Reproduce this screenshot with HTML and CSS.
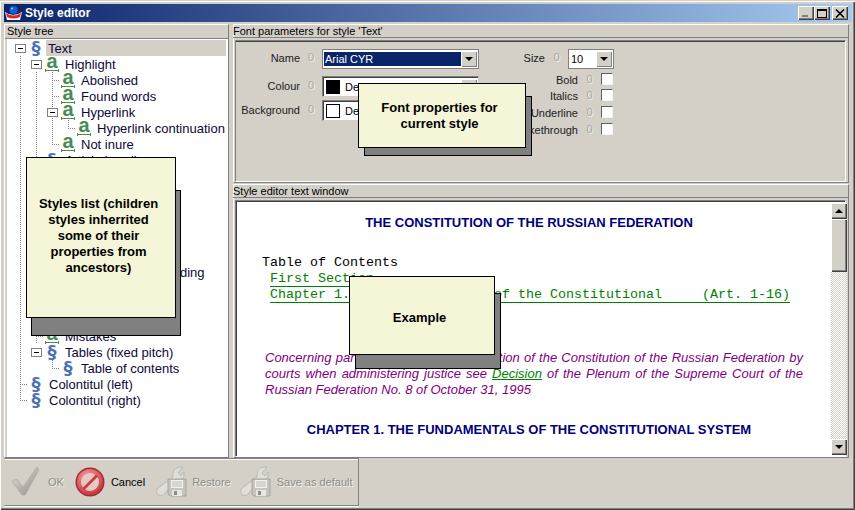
FILE: index.html
```html
<!DOCTYPE html>
<html lang="en">
<head>
  <meta charset="UTF-8" />
  <title>Style editor</title>
  <link rel="stylesheet" href="styles.css">
</head>
<body>
<div class="window">

  <!-- Title bar -->
  <div class="titlebar">
    <svg class="app-logo" width="17" height="16" viewBox="0 0 17 16">
      <path d="M0 7 Q8 13 17 7 L15 15 L2 15 Z" fill="#fff"/>
      <path d="M1 8 Q8 13 16 8 L15 12 Q8 15 2 12 Z" fill="#d8262c"/>
      <circle cx="8.5" cy="5" r="4" fill="#1060d8"/>
      <circle cx="7" cy="3.5" r="1" fill="#a8d0ff"/>
    </svg>
    <span class="title-text">Style editor</span>
    <div class="caption-btns">
      <span class="caption-btn"><i class="glyph-min"></i></span>
      <span class="caption-btn"><i class="glyph-max"></i></span>
      <span class="caption-btn close">
        <svg width="10" height="9" viewBox="0 0 10 9"><path d="M1 0.5 L9 8.5 M9 0.5 L1 8.5" stroke="#000" stroke-width="1.6" fill="none"/></svg>
      </span>
    </div>
  </div>

  <div class="main">

    <!-- Style tree -->
    <div class="pane tree-pane">
      <div class="pane-head">Style tree</div>
      <div class="tree">
        <div class="row"><span class="col"><b class="box"></b></span><span class="icon sect">§</span><span class="label selected">Text</span></div>
        <div class="row"><span class="col v"></span><span class="col"><b class="box"></b></span><span class="icon letter">a</span><span class="label">Highlight</span></div>
        <div class="row"><span class="col v"></span><span class="col v"></span><span class="col t"></span><span class="icon letter">a</span><span class="label">Abolished</span></div>
        <div class="row"><span class="col v"></span><span class="col v"></span><span class="col t"></span><span class="icon letter">a</span><span class="label">Found words</span></div>
        <div class="row"><span class="col v"></span><span class="col v"></span><span class="col v"><b class="box"></b></span><span class="icon letter">a</span><span class="label">Hyperlink</span></div>
        <div class="row"><span class="col v"></span><span class="col v"></span><span class="col v"></span><span class="col l"></span><span class="icon letter">a</span><span class="label">Hyperlink continuation</span></div>
        <div class="row"><span class="col v"></span><span class="col v"></span><span class="col l"></span><span class="icon letter">a</span><span class="label">Not inure</span></div>
        <div class="row"><span class="col v"></span><span class="col t"></span><span class="icon sect">§</span><span class="label">Article heading</span></div>
        <div class="row"><span class="col v"></span></div>
        <div class="row"><span class="col v"></span></div>
        <div class="row"><span class="col v"></span></div>
        <div class="row"><span class="col v"></span></div>
        <div class="row"><span class="col v"></span></div>
        <div class="row"><span class="col v"></span></div>
        <div class="row"><span class="col v"></span><span class="col t"></span><span class="icon sect">§</span><span class="label">Section and subheading</span></div>
        <div class="row"><span class="col v"></span></div>
        <div class="row"><span class="col v"></span></div>
        <div class="row"><span class="col v"></span></div>
        <div class="row"><span class="col v"></span><span class="col t"></span><span class="icon letter">a</span><span class="label">Mistakes</span></div>
        <div class="row"><span class="col v"></span><span class="col"><b class="box"></b></span><span class="icon sect">§</span><span class="label">Tables (fixed pitch)</span></div>
        <div class="row"><span class="col v"></span><span class="col"></span><span class="col l"></span><span class="icon sect">§</span><span class="label">Table of contents</span></div>
        <div class="row"><span class="col t"></span><span class="icon sect">§</span><span class="label">Colontitul (left)</span></div>
        <div class="row"><span class="col l"></span><span class="icon sect">§</span><span class="label">Colontitul (right)</span></div>
      </div>
    </div>

    <div class="right-side">

      <!-- Font parameters -->
      <div class="pane font-pane">
        <div class="pane-head">Font parameters for style 'Text'</div>
        <div class="font-form">
          <div class="form-left">
            <div class="field name-field">
              <span class="field-label">Name</span><span class="zero">0</span>
              <div class="combo">
                <span class="combo-value selected-value">Arial CYR</span>
                <span class="combo-btn"><i class="arrow"></i></span>
              </div>
            </div>
            <div class="field colour-field">
              <span class="field-label">Colour</span><span class="zero">0</span>
              <div class="combo sunken">
                <i class="swatch black"></i><span class="combo-value">Default</span>
                <span class="combo-btn"><i class="arrow"></i></span>
              </div>
            </div>
            <div class="field bg-field">
              <span class="field-label">Background</span><span class="zero">0</span>
              <div class="combo sunken">
                <i class="swatch"></i><span class="combo-value">Default</span>
                <span class="combo-btn"><i class="arrow"></i></span>
              </div>
            </div>
          </div>
          <div class="form-right">
            <div class="size-field">
              <span class="size-label">Size</span><span class="zero">0</span>
              <div class="combo size-combo">
                <span class="combo-value">10</span>
                <span class="combo-btn"><i class="arrow"></i></span>
              </div>
            </div>
            <div class="check-field h16"><span class="check-label">Bold</span><span class="zero">0</span><i class="checkbox"></i></div>
            <div class="check-field h17"><span class="check-label">Italics</span><span class="zero">0</span><i class="checkbox"></i></div>
            <div class="check-field h17"><span class="check-label">Underline</span><span class="zero">0</span><i class="checkbox"></i></div>
            <div class="check-field h17"><span class="check-label">Strikethrough</span><span class="zero">0</span><i class="checkbox"></i></div>
          </div>
        </div>
      </div>

      <!-- Sample text -->
      <div class="pane text-pane">
        <div class="pane-head">Style editor text window</div>
        <div class="text-frame">
          <div class="doc">
            <div class="doc-title">THE CONSTITUTION OF THE RUSSIAN FEDERATION</div>
            <div class="toc-head">Table of Contents</div>
            <div class="toc-link short">First Section</div>
            <div class="toc-link">Chapter 1. The Fundamentals of the Constitutional     (Art. 1-16)</div>
            <p class="note">Concerning particular aspects of application of the Constitution of the Russian Federation by courts when administering justice see <a class="note-link">Decision</a> of the Plenum of the Supreme Court of the Russian Federation No. 8 of October 31, 1995</p>
            <div class="doc-chapter">CHAPTER 1. THE FUNDAMENTALS OF THE CONSTITUTIONAL SYSTEM</div>
          </div>
          <div class="scrollbar">
            <span class="sb-btn"><i class="sb-up"></i></span>
            <span class="sb-thumb"></span>
            <span class="sb-track"></span>
            <span class="sb-btn"><i class="sb-down"></i></span>
          </div>
        </div>
      </div>
    </div>
  </div>

  <!-- Bottom toolbar -->
  <div class="toolbar">
    <div class="tool disabled ok-tool">
      <svg width="28" height="30" viewBox="0 0 28 30">
        <defs><linearGradient id="chk" x1="0" y1="0" x2="1" y2="1"><stop offset="0" stop-color="#e4e2dc"/><stop offset="1" stop-color="#8e8c88"/></linearGradient></defs>
        <path d="M0 14 L5 12 L11 20 L25 0 L27 3 L13 28 L10 28 Z" fill="url(#chk)" stroke="#a8a6a0" stroke-width="0.6"/>
      </svg>
      <span>OK</span>
    </div>
    <div class="tool cancel-tool">
      <svg width="30" height="30" viewBox="0 0 30 30">
        <defs><radialGradient id="red" cx="0.4" cy="0.3" r="0.8"><stop offset="0" stop-color="#f0a0a0"/><stop offset="1" stop-color="#c02c30"/></radialGradient></defs>
        <circle cx="15" cy="15" r="14.5" fill="#a82a2e"/>
        <circle cx="15" cy="15" r="13" fill="url(#red)"/>
        <circle cx="15" cy="15" r="9" fill="#e8c8c4"/>
        <path d="M7.5 21 L21 7.5 L23 9.5 L9.5 23 Z" fill="#c83c40"/>
      </svg>
      <span>Cancel</span>
    </div>
    <div class="tool disabled restore-tool">
      <svg width="32" height="32" viewBox="0 0 32 32"><use href="#wrench-disk"/></svg>
      <span>Restore</span>
    </div>
    <div class="tool disabled save-tool">
      <svg width="32" height="32" viewBox="0 0 32 32">
        <g id="wrench-disk">
          <path d="M27 1 Q18 0 17 8 L17 11 L2 22 Q-1 26 2 29 Q6 31 9 27 L18 17 Q26 17 28 10 L28 6 L25 10 L22 7 Z" fill="#dfded8" stroke="#b4b2ac" stroke-width="0.8"/>
          <path d="M12 13 H30 V30 H14 L12 28 Z" fill="#c6c4be" stroke="#9c9a94" stroke-width="0.8"/>
          <rect x="15" y="14" width="12" height="8" fill="#f2f1ec"/>
          <path d="M16 16 H26 M16 18 H26 M16 20 H26" stroke="#bcbab4"/>
          <rect x="16" y="24" width="10" height="6" fill="#e8e6e0"/>
          <rect x="18" y="25" width="3" height="4" fill="#8e8c86"/>
        </g>
      </svg>
      <span>Save as default</span>
    </div>
  </div>

  <!-- Help callouts lying over the window -->
  <div class="shadow shadow-tree"></div>
  <div class="callout callout-tree">Styles list (children<br>styles inherrited<br>some of their<br>properties from<br>ancestors)</div>
  <div class="shadow shadow-font"></div>
  <div class="callout callout-font">Font properties for<br>current style</div>
  <div class="shadow shadow-doc"></div>
  <div class="callout callout-doc">Example</div>
</div>
</body>
</html>
```

FILE: styles.css
```css
html, body {
  margin: 0;
  padding: 0;
}
body {
  width: 855px;
  height: 510px;
  overflow: hidden;
  font-family: "Liberation Sans", Arial, sans-serif;
  font-size: 11px;
  color: #000;
}
.window {
  position: relative;
  box-sizing: border-box;
  width: 855px;
  height: 510px;
  padding: 4px 6px 0 4px;
  background: #d4d0c8;
  border-top: 1px solid #d4d0c8;
  box-shadow: inset 1px 1px 0 #fff, inset -1px -1px 0 #404040, inset -2px -2px 0 #808080;
  display: flex;
  flex-direction: column;
}

/* title bar */
.titlebar {
  flex: none;
  height: 18px;
  margin-top: -1px;
  margin-right: -3px;
  display: flex;
  align-items: center;
  background: linear-gradient(to right, #0a246a, #a6caf0);
  color: #fff;
}
.app-logo {
  margin: 0 3px 0 1px;
  flex: none;
}
.title-text {
  font-weight: bold;
  font-size: 12px;
}
.caption-btns {
  margin-left: auto;
  margin-right: 4px;
  display: flex;
}
.caption-btn {
  box-sizing: border-box;
  width: 16px;
  height: 14px;
  background: #d4d0c8;
  box-shadow: inset 1px 1px 0 #fff, inset -1px -1px 0 #404040, inset -2px -2px 0 #808080;
  position: relative;
  display: flex;
  align-items: center;
  justify-content: center;
}
.caption-btn.close {
  margin-left: 2px;
}
.glyph-min {
  position: absolute;
  left: 4px;
  bottom: 3px;
  width: 6px;
  height: 2px;
  background: #808080;
}
.glyph-max {
  box-sizing: border-box;
  width: 10px;
  height: 9px;
  border: 1px solid #000;
  border-top-width: 2px;
}

.main {
  flex: none;
  display: flex;
  gap: 4px;
  margin-top: 2px;
  height: 434px;
}
.pane {
  box-sizing: border-box;
  border: 1px solid;
  border-color: #fff #808080 #808080 #fff;
  display: flex;
  flex-direction: column;
}
.pane-head {
  flex: none;
  height: 13px;
  line-height: 13px;
  padding-left: 2px;
  white-space: nowrap;
  overflow: hidden;
  border-bottom: 1px solid #808080;
}

/* tree */
.tree-pane {
  width: 225px;
}
.tree {
  flex: 1;
  margin-left: 2px;
  padding: 1px 0 0 5px;
  background: #fff;
  border-right: 1px solid #fff;
  border-bottom: 1px solid #fff;
  color: #0c0838;
  font-size: 13px;
}
.row {
  height: 16px;
  display: flex;
  white-space: nowrap;
}
.col {
  flex: none;
  width: 16px;
  height: 16px;
  position: relative;
  background-repeat: no-repeat;
}
.col.v {
  background-image: repeating-linear-gradient(to bottom, #808080 0 1px, transparent 1px 2px);
  background-size: 1px 100%;
  background-position: 8px 0;
}
.col.t {
  background-image:
    repeating-linear-gradient(to bottom, #808080 0 1px, transparent 1px 2px),
    repeating-linear-gradient(to right, #808080 0 1px, transparent 1px 2px);
  background-size: 1px 100%, 8px 1px;
  background-position: 8px 0, 8px 8px;
}
.col.l {
  background-image:
    repeating-linear-gradient(to bottom, #808080 0 1px, transparent 1px 2px),
    repeating-linear-gradient(to right, #808080 0 1px, transparent 1px 2px);
  background-size: 1px 8px, 8px 1px;
  background-position: 8px 0, 8px 8px;
}
.box {
  position: absolute;
  left: 3px;
  top: 4px;
  box-sizing: border-box;
  width: 11px;
  height: 9px;
  border: 1px solid #808080;
  background: linear-gradient(#000, #000) no-repeat center / 5px 1px, #fff;
}
.icon {
  flex: none;
  width: 16px;
  height: 16px;
  margin-right: 5px;
  text-align: center;
  font-weight: bold;
}
.icon.sect {
  font-family: "DejaVu Sans", sans-serif;
  color: #4a72b4;
  font-size: 18px;
  line-height: 16px;
}
.icon.letter {
  color: #4a8a56;
  font-size: 20px;
  line-height: 11px;
  background:
    linear-gradient(#4a8a56, #4a8a56) no-repeat 1px 14px / 14px 1px,
    linear-gradient(#4a8a56, #4a8a56) no-repeat 1px 13px / 1px 3px,
    linear-gradient(#4a8a56, #4a8a56) no-repeat 14px 13px / 1px 3px;
}
.label {
  line-height: 17px;
}
.label.selected {
  flex: 1;
  background: #d4d0c8;
  margin-left: -3px;
  margin-right: 1px;
  padding-left: 2px;
}

/* right side */
.right-side {
  width: 616px;
  display: flex;
  flex-direction: column;
  gap: 1px;
}
.font-pane {
  height: 159px;
}
.font-pane .pane-head {
  height: 12px;
  line-height: 12px;
  margin: 0 0 2px -1px;
  padding-left: 0;
}
.font-form {
  flex: 1;
  margin: 0 2px 0 1px;
  display: flex;
  border: 1px solid;
  border-color: #808080 #fff #fff #808080;
  box-shadow: inset 0 1px 0 #404040;
  padding-top: 8px;
}
.form-left {
  width: 243px;
  flex: none;
}
.field {
  display: flex;
  align-items: center;
}
.name-field {
  height: 20px;
  margin-bottom: 7px;
}
.colour-field {
  height: 21px;
  margin-bottom: 3px;
}
.bg-field {
  height: 21px;
}
.field-label {
  width: 64px;
  text-align: right;
  color: #202020;
  position: relative;
  top: -1px;
}
.zero {
  width: 22px;
  text-align: center;
  font-size: 11px;
  color: #a8a8a0;
  text-shadow: 1px 1px 0 #eeeeea;
  position: relative;
  top: -2px;
}
.combo {
  box-sizing: border-box;
  width: 157px;
  height: 100%;
  background: #fff;
  border: 1px solid #808080;
  box-shadow: inset 0 0 0 1px #fff;
  display: flex;
  align-items: center;
  padding: 1px;
  position: relative;
}
.combo.sunken {
  border-color: #808080 #d4d0c8 #d4d0c8 #808080;
  box-shadow: inset 1px 1px 0 #404040;
}
.combo-value {
  flex: 1;
  padding-left: 1px;
  line-height: 14px;
}
.selected-value {
  background: #0a246a;
  color: #fff;
}
.swatch {
  box-sizing: border-box;
  flex: none;
  width: 14px;
  height: 14px;
  margin: 0 4px 0 2px;
  border: 1px solid #000;
  background: #fff;
}
.swatch.black {
  background: #000;
}
.combo-btn {
  flex: none;
  box-sizing: border-box;
  width: 16px;
  height: 16px;
  background: #d4d0c8;
  box-shadow: inset 1px 1px 0 #fff, inset -1px -1px 0 #808080;
  display: flex;
  align-items: center;
  justify-content: center;
}
.arrow {
  width: 0;
  height: 0;
  border-style: solid;
  border-width: 4px 4px 0;
  border-color: #000 transparent transparent;
}
.form-right {
  flex: none;
  width: 135px;
}
.size-field {
  display: flex;
  align-items: center;
  height: 20px;
  margin-bottom: 4px;
}
.size-label {
  width: 66px;
  text-align: right;
  color: #202020;
  position: relative;
  top: -1px;
}
.size-field .zero {
  width: 23px;
}
.size-combo {
  width: 46px;
}
.check-field {
  display: flex;
  align-items: flex-start;
}
.h16 {
  height: 16px;
}
.h17 {
  height: 17px;
}
.check-label {
  width: 99px;
  flex: none;
  text-align: right;
  color: #202020;
  line-height: 15px;
  white-space: nowrap;
  direction: rtl;
}
.check-field .zero {
  width: 23px;
  flex: none;
  line-height: 15px;
  top: -1px;
}
.checkbox {
  box-sizing: border-box;
  flex: none;
  width: 12px;
  height: 12px;
  background: #fff;
  border: 1px solid;
  border-color: #606060 #f4f4f0 #f4f4f0 #606060;
}

.text-pane {
  height: 274px;
}
.text-pane .pane-head {
  height: 12px;
  line-height: 12px;
  margin-left: -1px;
  padding-left: 0;
}
.text-frame {
  flex: 1;
  min-height: 0;
  margin: 2px 2px 0 1px;
  border: 1px solid;
  border-color: #808080 #fff #fff #808080;
  box-shadow: inset 1px 1px 0 #404040;
  padding: 2px 0 1px 1px;
  display: flex;
  background: #fff;
}
.doc {
  width: 594px;
  flex: none;
  box-sizing: border-box;
  padding: 12px 27px 0 17px;
  overflow: hidden;
  line-height: 16px;
  font-size: 13px;
}
.doc-title, .doc-chapter {
  text-align: center;
  font-weight: bold;
  color: #00007a;
  white-space: nowrap;
}
.toc-head {
  margin: 24px 0 0 8px;
  font-family: "Liberation Mono", monospace;
  font-size: 13.33px;
  white-space: pre;
}
.toc-link {
  margin-left: 16px;
  font-family: "Liberation Mono", monospace;
  font-size: 13.33px;
  color: #008000;
  white-space: pre;
  height: 16px;
  width: 520px;
  box-shadow: inset 0 -1px 0 #008000;
  line-height: 15px;
}
.toc-link.short {
  width: 104px;
}
.note {
  margin: 47px 0 0 11px;
  width: 538px;
  font-style: italic;
  color: #800080;
  text-align: justify;
}
.note-link {
  color: #008000;
  text-decoration: underline;
}
.doc-chapter {
  margin-top: 24px;
}
.scrollbar {
  width: 16px;
  flex: none;
  display: flex;
  flex-direction: column;
}
.sb-btn {
  flex: none;
  box-sizing: border-box;
  height: 16px;
  background: #d4d0c8;
  box-shadow: inset 1px 1px 0 #fff, inset -1px -1px 0 #404040, inset -2px -2px 0 #808080;
  display: flex;
  align-items: center;
  justify-content: center;
}
.sb-up, .sb-down {
  width: 0;
  height: 0;
  border-style: solid;
  border-color: transparent;
  border-width: 0 4px 4px;
  border-bottom-color: #000;
}
.sb-down {
  border-width: 4px 4px 0;
  border-top-color: #000;
}
.sb-thumb {
  flex: none;
  height: 53px;
  background: #d4d0c8;
  box-shadow: inset 1px 1px 0 #fff, inset -1px -1px 0 #404040, inset -2px -2px 0 #808080;
}
.sb-track {
  flex: 1;
  background: conic-gradient(#fff 25%, #d4d0c8 0 50%, #fff 0 75%, #d4d0c8 0) 0 0 / 2px 2px;
}

/* toolbar */
.toolbar {
  flex: none;
  box-sizing: border-box;
  width: 355px;
  height: 48px;
  border: 1px solid;
  border-color: #808080 #808080 #808080 #d4d0c8;
  box-shadow: 0 1px 0 #fff, inset 0 1px 0 #fff;
  display: flex;
  align-items: center;
}
.tool {
  display: flex;
  align-items: center;
  flex: none;
}
.tool.disabled span {
  color: #8c8c86;
  text-shadow: 1px 1px 0 #f0f0ec;
}
.ok-tool {
  margin-left: 7px;
  gap: 8px;
}
.cancel-tool {
  margin-left: 11px;
  gap: 6px;
}
.restore-tool {
  margin-left: 11px;
  gap: 4px;
}
.save-tool {
  margin-left: 9px;
  gap: 5px;
}

/* callouts */
.callout, .shadow {
  position: absolute;
  box-sizing: border-box;
  border: 1px solid #000;
}
.shadow {
  background: #808080;
}
.callout {
  font-size: 13px;
  background: #f5f5d7;
  display: flex;
  align-items: center;
  justify-content: center;
  text-align: center;
  font-weight: bold;
  line-height: 16px;
  color: #000;
  padding-right: 5px;
}
.callout-tree { left: 26px; top: 156px; width: 150px; height: 161px; padding-bottom: 4px; }
.shadow-tree { left: 31px; top: 189px; width: 150px; height: 146px; }
.callout-font { left: 358px; top: 82px; width: 168px; height: 65px; }
.shadow-font { left: 364px; top: 95px; width: 168px; height: 60px; }
.callout-doc { left: 349px; top: 275px; width: 146px; height: 79px; padding-top: 4px; }
.shadow-doc { left: 355px; top: 292px; width: 146px; height: 76px; }
```
